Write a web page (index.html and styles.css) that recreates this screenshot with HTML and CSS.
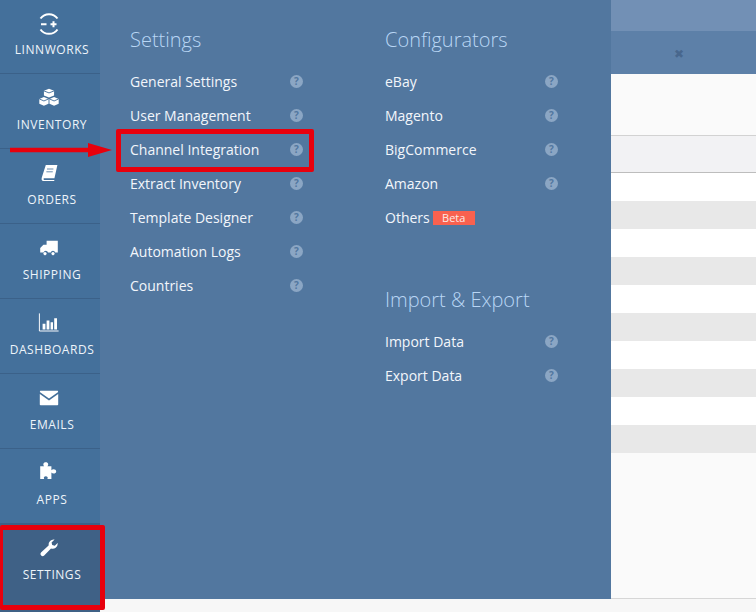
FILE: index.html
```html
<!DOCTYPE html>
<html lang="en">
<head>
<meta charset="utf-8">
<title>Linnworks Settings</title>
<link rel="stylesheet" href="styles.css">
</head>
<body>
<div class="app">
  <nav class="side">
    <a class="nav-item">
      <svg class="nav-icon" viewBox="0 0 24 24" width="24" height="24"><path class="ln" d="M3.500 6.500A10.500 10.500 0 0 1 20.500 6.500"/><path class="ln" d="M3.500 17.500A10.500 10.500 0 0 0 20.500 17.500"/><path class="ln" d="M4 12.300h5.500M13.500 12.300h6M16.500 9.300v6"/></svg>
      <span>LINNWORKS</span>
    </a>
    <a class="nav-item">
      <svg class="nav-icon" viewBox="-1 -1 26 26" width="24" height="24"><path class="fl" d="M12 2l5.500 2.200v5L12 11.400 6.500 9.200v-5zM6.500 10.800l5 2.200v5.200l-5 2.300-5-2.300V13zM17.500 10.800l5 2.200v5.200l-5 2.300-5-2.300V13z"/><path class="cut" d="M6.500 4.300L12 6.500l5.500-2.200M1.500 13l5 2.200 5-2.200M12.500 13l5 2.200 5-2.200"/></svg>
      <span>INVENTORY</span>
    </a>
    <a class="nav-item">
      <svg class="nav-icon" viewBox="-3 -3 30 30" width="24" height="24"><path class="fl" d="M8 2h14.500l-3.700 16.500H5.500c-.8 1.500 0 2.200 1 2.200h12.300l-.4 1.300H5C3 22 2.300 20 3 17.500z"/><path class="cut" d="M9.500 7h8M8.700 10.500h8"/></svg>
      <span>ORDERS</span>
    </a>
    <a class="nav-item">
      <svg class="nav-icon" viewBox="-3 -3 30 30" width="24" height="24"><path class="fl" d="M9 3h14v14.500h-3.200a3 3 0 0 0-5.700 0h-3.300a3 3 0 0 0-5.700 0H1v-5.500l4-4h4z"/><circle class="fl" cx="7" cy="19" r="2"/><circle class="fl" cx="17" cy="19" r="2"/></svg>
      <span>SHIPPING</span>
    </a>
    <a class="nav-item">
      <svg class="nav-icon" viewBox="-3 -3 30 30" width="24" height="24"><path class="ln thin" d="M0 0v22h24"/><path class="fl" d="M4 13h3.500v7H4zM9 9h3.500v11H9zM14 11h3v9h-3zM18.500 6h3.500v14h-3.500z"/></svg>
      <span>DASHBOARDS</span>
    </a>
    <a class="nav-item">
      <svg class="nav-icon" viewBox="-3 -3 30 30" width="24" height="24"><path class="fl" d="M1 3h22l.5 1.500L12 12.500.5 4.500zM.5 7l11.500 8 11.500-8v13a1 1 0 0 1-1 1h-21a1 1 0 0 1-1-1z"/></svg>
      <span>EMAILS</span>
    </a>
    <a class="nav-item">
      <svg class="nav-icon icon-apps" viewBox="-3 -3 30 30" width="24" height="24"><path class="fl" d="M1 6h5c-1.800-1.500-1.400-5 2-5s3.800 3.500 2 5h5v5c1.500-1.800 6-1.500 6 1.500s-4.500 3.300-6 1.500v8h-5c1.200-2.200-.2-3.500-2-3.500s-3.200 1.300-2 3.500H1z"/></svg>
      <span>APPS</span>
    </a>
    <a class="nav-item active">
      <svg class="nav-icon" viewBox="-3 -3 30 30" width="24" height="24"><path class="fl" d="M23 6.200a6.500 6.500 0 0 1-8.500 6.300L6 21.500a2.800 2.800 0 0 1-4-3.900l9.500-8.600A6.500 6.500 0 0 1 19 1.500l-3.800 3.600.8 3.200 3.200.8 3.600-3.500c.1.300.2.600.2 1z"/></svg>
      <span>SETTINGS</span>
    </a>
  </nav>

  <section class="panel">
    <div class="col col-a">
      <h2>Settings</h2>
      <ul>
        <li><span>General Settings</span><i class="help">?</i></li>
        <li><span>User Management</span><i class="help">?</i></li>
        <li><span>Channel Integration</span><i class="help">?</i></li>
        <li><span>Extract Inventory</span><i class="help">?</i></li>
        <li><span>Template Designer</span><i class="help">?</i></li>
        <li><span>Automation Logs</span><i class="help">?</i></li>
        <li><span>Countries</span><i class="help">?</i></li>
      </ul>
    </div>
    <div class="col col-b">
      <h2>Configurators</h2>
      <ul>
        <li><span>eBay</span><i class="help">?</i></li>
        <li><span>Magento</span><i class="help">?</i></li>
        <li><span>BigCommerce</span><i class="help">?</i></li>
        <li><span>Amazon</span><i class="help">?</i></li>
        <li><span>Others</span><b class="beta">Beta</b></li>
      </ul>
      <h2 class="second">Import &amp; Export</h2>
      <ul>
        <li><span>Import Data</span><i class="help">?</i></li>
        <li><span>Export Data</span><i class="help">?</i></li>
      </ul>
    </div>
  </section>

  <main class="content">
    <div class="top-strip"></div>
    <div class="tab-bar"><span class="close">✖</span></div>
    <div class="toolbar"></div>
    <div class="grid-head"></div>
    <div class="rows">
      <div class="row"></div><div class="row alt"></div>
      <div class="row"></div><div class="row alt"></div>
      <div class="row"></div><div class="row alt"></div>
      <div class="row"></div><div class="row alt"></div>
      <div class="row"></div><div class="row alt"></div>
    </div>
    <div class="grid-fill"></div>
    <div class="footer"></div>
  </main>

  <div class="mark mark-settings"></div>
  <div class="mark mark-channel"></div>
  <svg class="arrow" width="102" height="16" viewBox="0 0 102 16"><path d="M0 5.800h78V1l24 7-24 7v-4.800H0z" fill="#e8000d"/></svg>
</div>
</body>
</html>
```

FILE: styles.css
```css
* { box-sizing: border-box; }
html, body { margin: 0; padding: 0; }
body {
  width: 756px;
  height: 612px;
  overflow: hidden;
  font-family: "Open Sans", "Liberation Sans", sans-serif;
  background: #f7f7f7;
}
.app { position: relative; display: flex; width: 756px; height: 612px; overflow: hidden; }

.side { width: 100px; flex: none; background: #44709b; display: flex; flex-direction: column; }
.nav-item {
  height: 75px;
  flex: none;
  display: flex;
  flex-direction: column;
  align-items: center;
  padding-top: 12px;
  color: #eef4fa;
  font-size: 12px;
  line-height: 16px;
  letter-spacing: .55px;
  border-bottom: 1px solid #3b6189;
}
.nav-item:first-child { height: 74px; }
.nav-icon { display: block; flex: none; margin-right: 2px; }
.icon-apps { margin-top: -2px; margin-bottom: 2px; }
.nav-item span { display: block; margin-top: 7px; padding-left: 4px; }
.nav-item:first-child span { margin-top: 6px; }
.nav-item.active { background: #3f6186; height: 89px; border-bottom: 0; }
.fl { fill: #fff; }
.ln { fill: none; stroke: #fff; stroke-width: 2; }
.ln.thin { stroke-width: 1.2; }
.cut { fill: none; stroke: #44709b; stroke-width: 1; }

.panel {
  width: 511px;
  height: 599px;
  flex: none;
  background: #52779f;
  display: flex;
  padding: 26px 0 0 30px;
}
.col { width: 255px; flex: none; }
.col h2 {
  margin: 0 0 11px;
  font-size: 20px;
  line-height: 28px;
  font-weight: 300;
  color: #b9d6f5;
}
.col h2.second { margin-top: 51px; }
.col ul { list-style: none; margin: 0; padding: 0; }
.col li {
  position: relative;
  height: 34px;
  display: flex;
  align-items: center;
  color: #f2f6fb;
  font-size: 14px;
  line-height: 20px;
}
.help {
  position: absolute;
  left: 160px;
  top: 10px;
  width: 13px;
  height: 13px;
  border-radius: 50%;
  background: #8ba6c4;
  color: #52779f;
  font: 700 10px/13px "Open Sans", sans-serif;
  text-align: center;
}
.beta {
  margin-left: 3px;
  width: 42px;
  height: 14px;
  background: #f9614f;
  color: #fde9e5;
  font-size: 11px;
  font-weight: 400;
  line-height: 14px;
  text-align: center;
}

.content { flex: 1; display: flex; flex-direction: column; }
.top-strip { height: 31px; background: #7290b5; }
.tab-bar { height: 43px; background: #5d80a8; display: flex; align-items: center; padding: 2px 0 0 63px; }
.close { color: #48678d; font-size: 12px; line-height: 12px; font-family: "DejaVu Sans", sans-serif; }
.toolbar { height: 62px; background: #fafafa; border-bottom: 1px solid #d2d2d2; }
.grid-head { height: 37px; background: #f2f2f4; border-bottom: 1px solid #bdbdbd; }
.row { height: 28px; background: #fff; }
.row.alt { background: #e8e8e8; }
.grid-fill { height: 146px; background: #fafafa; border-bottom: 1px solid #d6d6d6; }
.footer { flex: 1; background: #f7f7f7; }

.mark { position: absolute; border: 5px solid #e8000d; border-radius: 2px; }
.mark-settings { left: 0; top: 525px; width: 105px; height: 85px; border-left-width: 3px; }
.mark-channel { left: 116px; top: 129px; width: 198px; height: 43px; }
.arrow { position: absolute; left: 10px; top: 142px; }
```
